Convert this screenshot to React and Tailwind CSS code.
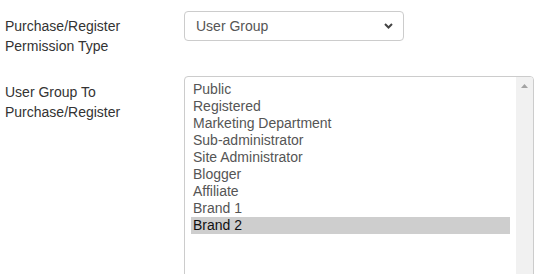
export default function App() {
  const groups = [
    "Public",
    "Registered",
    "Marketing Department",
    "Sub-administrator",
    "Site Administrator",
    "Blogger",
    "Affiliate",
    "Brand 1",
    "Brand 2",
  ];
  return (
    <div
      className="h-[274px] w-[550px] overflow-hidden bg-white pl-[5px] pt-[11px] text-[14px] text-[#333]"
      style={{ fontFamily: '"Liberation Sans", Arial, sans-serif' }}
    >
      <div className="flex">
        <div className="w-[179px] pt-[5px] leading-[20px]">
          Purchase/Register
          <br />
          Permission Type
        </div>
        <div className="flex h-[30px] w-[220px] items-center justify-between rounded-[4px] border border-[#ccc] pl-[11px] pr-[8px] leading-[20px] text-[#555]">
          <span>User Group</span>
          <svg width="9" height="6" viewBox="0 0 9 6" className="mr-[2px]">
            <path d="M1 1 L4.5 4.5 L8 1" fill="none" stroke="#444" strokeWidth="2" />
          </svg>
        </div>
      </div>
      <div className="mt-[20px] flex">
        <div className="w-[179px] pt-[6px] leading-[20px]">
          User Group To
          <br />
          Purchase/Register
        </div>
        <div className="flex h-[220px] w-[350px] rounded-[4px] border border-[#ccc]">
          <div className="flex-1 px-[6px] pt-[4px] text-[#555]">
            {groups.map((g) => (
              <div
                key={g}
                className={
                  "h-[17px] px-[2px] leading-[16px] " +
                  (g === "Brand 2" ? "bg-[#cecece] text-[#111]" : "")
                }
              >
                {g}
              </div>
            ))}
          </div>
          <div className="flex w-[17px] justify-center rounded-tr-[3px] bg-[#f1f1f1] pt-[7px]">
            <svg width="7" height="4" viewBox="0 0 7 4">
              <path d="M0 4 L3.5 0 L7 4 Z" fill="#a3a3a3" />
            </svg>
          </div>
        </div>
      </div>
    </div>
  );
}
